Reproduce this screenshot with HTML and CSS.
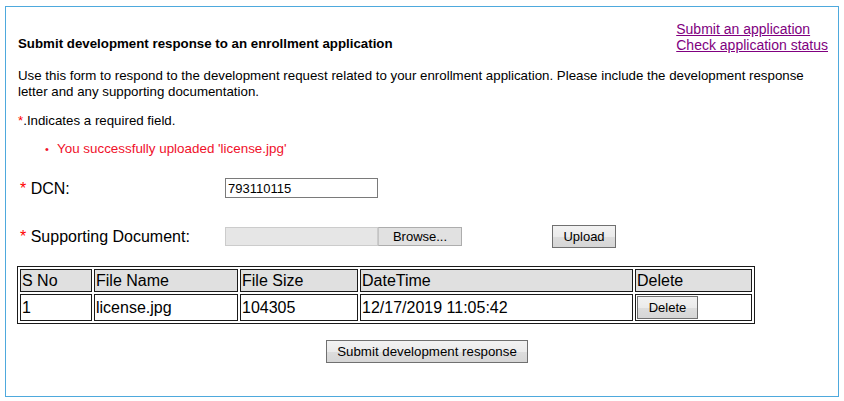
FILE: index.html
```html
<!DOCTYPE html>
<html>
<head>
<meta charset="utf-8">
<link rel="stylesheet" href="styles.css">
</head>
<body>
<div class="panel">
  <div class="header">
    <div class="title">Submit development response to an enrollment application</div>
    <div class="links">
      <a href="#">Submit an application</a>
      <a href="#">Check application status</a>
    </div>
  </div>
  <p class="intro">Use this form to respond to the development request related to your enrollment application. Please include the development response letter and any supporting documentation.</p>
  <p class="required"><span class="req">*</span>.Indicates a required field.</p>
  <ul class="messages">
    <li><span class="bullet">&bull;</span>You successfully uploaded 'license.jpg'</li>
  </ul>
  <div class="field-row dcn-row">
    <label class="field-label"><span class="req">*</span> DCN:</label>
    <input class="text-input" type="text" value="793110115">
  </div>
  <div class="field-row doc-row">
    <label class="field-label"><span class="req">*</span> Supporting Document:</label>
    <div class="file-input">
      <span class="file-name"></span>
      <span class="browse">Browse...</span>
    </div>
    <button class="btn upload-btn" type="button">Upload</button>
  </div>
  <table class="files">
    <thead>
      <tr>
        <th class="c-sno">S No</th>
        <th class="c-name">File Name</th>
        <th class="c-size">File Size</th>
        <th class="c-date">DateTime</th>
        <th class="c-del">Delete</th>
      </tr>
    </thead>
    <tbody>
      <tr>
        <td>1</td>
        <td>license.jpg</td>
        <td>104305</td>
        <td>12/17/2019 11:05:42</td>
        <td><button class="btn delete-btn" type="button">Delete</button></td>
      </tr>
    </tbody>
  </table>
  <div class="submit-row">
    <button class="btn submit-btn" type="button">Submit development response</button>
  </div>
</div>
</body>
</html>
```
FILE: styles.css
```css
html, body {
  margin: 0;
  padding: 0;
  background: #ffffff;
}
body {
  font-family: "Liberation Sans", Arial, sans-serif;
  font-size: 13.3px;
  line-height: 16px;
  color: #000000;
  padding: 6px 0 0 5px;
}
.panel {
  box-sizing: border-box;
  width: 834px;
  height: 391px;
  border: 1px solid #4ea9dd;
  padding: 14px 10px 0 12px;
}
.header {
  display: flex;
  justify-content: space-between;
  align-items: flex-end;
}
.title {
  font-weight: bold;
  margin-bottom: 1px;
}
.links {
  display: flex;
  flex-direction: column;
  font-size: 14px;
  line-height: 16px;
}
.links a {
  color: #800080;
  text-decoration: underline;
}
.intro {
  margin: 15px 0 0 0;
}
.required {
  margin: 13px 0 0 0;
}
.req {
  color: #ff0000;
}
.messages {
  list-style: none;
  margin: 12px 0 0 0;
  padding: 0 0 0 27px;
  color: #f0102a;
  font-size: 13.4px;
}
.messages li {
  display: flex;
}
.bullet {
  width: 12px;
  font-size: 11px;
}
.field-row {
  display: flex;
  align-items: center;
}
.dcn-row {
  margin-top: 21px;
  height: 20px;
}
.doc-row {
  margin-top: 27px;
  height: 23px;
}
.field-label {
  width: 205px;
  padding-left: 2px;
  font-size: 16px;
  line-height: 19px;
}
.text-input {
  box-sizing: border-box;
  width: 153px;
  height: 20px;
  margin: 0;
  border: 1px solid #7a7a7a;
  padding: 0 2px;
  font-family: "Liberation Sans", Arial, sans-serif;
  font-size: 13px;
  color: #000;
  outline: none;
}
.file-input {
  display: flex;
  height: 19px;
}
.file-name {
  box-sizing: border-box;
  width: 153px;
  height: 19px;
  background: #e6e6e6;
  border: 1px solid #cccccc;
}
.browse {
  box-sizing: border-box;
  width: 84px;
  height: 19px;
  background: #e1e1e1;
  border: 1px solid #adadad;
  border-left-color: #c4c4c4;
  text-align: center;
  line-height: 17px;
  font-size: 13px;
}
.btn {
  box-sizing: border-box;
  margin: 0;
  border: 1px solid #707070;
  background: linear-gradient(#f2f2f2 0%, #ebebeb 50%, #dddddd 51%, #d6d6d6 100%);
  font-family: "Liberation Sans", Arial, sans-serif;
  font-size: 13px;
  color: #000;
  padding: 0;
  height: 23px;
  line-height: 20px;
}
.upload-btn {
  width: 64px;
  margin-left: 90px;
}
.files {
  margin: 18px 0 0 -1px;
  width: 738px;
  table-layout: fixed;
  border-collapse: separate;
  border-spacing: 2px;
  border: 1px solid #1a1a1a;
  font-size: 16px;
}
.files th,
.files td {
  box-sizing: border-box;
  border: 1px solid #1a1a1a;
  padding: 1px;
  text-align: left;
  font-weight: normal;
  line-height: 19px;
  vertical-align: middle;
}
.files th {
  background: #e0e0e0;
}
.c-sno { width: 72px; }
.c-name { width: 144px; }
.c-size { width: 118px; }
.c-date { width: 273px; }
.c-del { width: 117px; }
.delete-btn {
  display: block;
  width: 61px;
}
.submit-row {
  margin-top: 16px;
  padding-left: 308px;
}
.submit-btn {
  width: 202px;
  font-size: 13.3px;
}
```
